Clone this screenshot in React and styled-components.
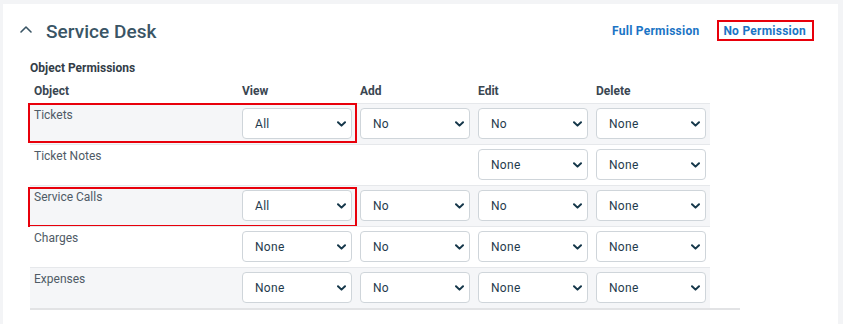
import styled, { createGlobalStyle } from "styled-components";

const rows = [
  { name: "Tickets", view: "All", add: "No", edit: "No", del: "None", mark: 0 },
  { name: "Ticket Notes", view: null, add: null, edit: "None", del: "None" },
  { name: "Service Calls", view: "All", add: "No", edit: "No", del: "None", mark: 2 },
  { name: "Charges", view: "None", add: "No", edit: "None", del: "None" },
  { name: "Expenses", view: "None", add: "No", edit: "None", del: "None" },
];

function Chevron() {
  return (
    <svg width="9" height="6" viewBox="0 0 9 6">
      <path d="M1 1.2 L4.5 4.6 L8 1.2" fill="none" stroke="#15374a" strokeWidth="2" strokeLinecap="round" strokeLinejoin="round" />
    </svg>
  );
}

function Select({ value }) {
  if (!value) return <span />;
  return (
    <SelectBox>
      <span>{value}</span>
      <Chevron />
    </SelectBox>
  );
}

export default function App() {
  return (
    <>
      <GlobalStyle />
      <Card>
        <Header>
          <svg width="14" height="14" viewBox="0 0 14 14">
            <path d="M2 10 L7 5 L12 10" fill="none" stroke="#3a5565" strokeWidth="1.6" strokeLinecap="round" strokeLinejoin="round" />
          </svg>
          <Title>Service Desk</Title>
          <Links>
            <PermLink>Full Permission</PermLink>
            <Marked>
              <PermLink>No Permission</PermLink>
            </Marked>
          </Links>
        </Header>

        <Section>
          <SectionTitle>Object Permissions</SectionTitle>
          <Table>
            <HeadRow>
              <span>Object</span>
              <span>View</span>
              <span>Add</span>
              <span>Edit</span>
              <span>Delete</span>
            </HeadRow>
            {rows.map((r, i) => (
              <Row key={r.name} $shaded={i % 2 === 0}>
                <Label>{r.name}</Label>
                <Select value={r.view} />
                <Select value={r.add} />
                <Select value={r.edit} />
                <Select value={r.del} />
                {r.mark !== undefined && <Highlight $top={r.mark} />}
              </Row>
            ))}
          </Table>
        </Section>
      </Card>
    </>
  );
}

// styles

const GlobalStyle = createGlobalStyle`
  body {
    margin: 0;
    background: #f3f4f6;
    font-family: Roboto, "Liberation Sans", sans-serif;
  }
`;

const Card = styled.div`
  margin: 4px 5px 0 3px;
  background: #fff;
  min-height: 320px;
  padding-top: 12px;
  box-sizing: border-box;
`;

const Header = styled.div`
  display: flex;
  align-items: center;
  height: 30px;
  padding: 0 24px 0 16px;

  svg {
    margin-top: -4px;
  }
`;

const Title = styled.h2`
  margin: 0 0 0 13px;
  font-size: 19px;
  font-weight: 500;
  color: #3a5565;
  letter-spacing: 0.05px;
`;

const Links = styled.div`
  margin-left: auto;
  display: flex;
  align-items: center;
  gap: 18px;
`;

const PermLink = styled.a`
  font-size: 12px;
  line-height: 14px;
  font-weight: 700;
  letter-spacing: 0.25px;
  color: #1b74c5;
  cursor: pointer;
`;

const Marked = styled.div`
  display: flex;
  border: 2px solid #e8000b;
  padding: 2px 6px 1px 4px;
  margin-top: -2px;
`;

const Section = styled.div`
  padding-left: 27px;
`;

const SectionTitle = styled.div`
  margin-top: 15px;
  font-size: 12px;
  line-height: 14px;
  font-weight: 700;
  color: #333d47;
`;

const Table = styled.div`
  width: 710px;
  margin-top: 9px;
  border-bottom: 2px solid #e2e3e5;
`;

const grid = `
  display: grid;
  grid-template-columns: 200px repeat(4, 110px);
  column-gap: 8px;
  padding: 0 4px;
  width: 680px;
  box-sizing: border-box;
`;

const HeadRow = styled.div`
  ${grid}
  font-size: 12px;
  line-height: 14px;
  font-weight: 700;
  color: #3a4651;
  padding-bottom: 5px;
`;

const Row = styled.div`
  ${grid}
  position: relative;
  border-top: 1px solid #e6e8eb;
  padding-top: 4px;
  padding-bottom: 5px;
  background: ${({ $shaded }) => ($shaded ? "#f5f6f8" : "#fff")};
`;

const Label = styled.span`
  font-size: 12px;
  line-height: 14px;
  color: #4f5b66;
`;

const SelectBox = styled.div`
  height: 31px;
  box-sizing: border-box;
  border: 1px solid #cfd5da;
  border-radius: 4px;
  background: #fff;
  display: flex;
  align-items: center;
  justify-content: space-between;
  padding: 0 5px 0 12px;
  font-size: 12px;
  letter-spacing: 0.3px;
  color: #1f3b4d;
`;

const Highlight = styled.div`
  position: absolute;
  left: -2px;
  top: ${({ $top }) => $top - 1}px;
  width: 329px;
  height: 40px;
  border: 2px solid #e8000b;
  box-sizing: border-box;
  pointer-events: none;
`;
